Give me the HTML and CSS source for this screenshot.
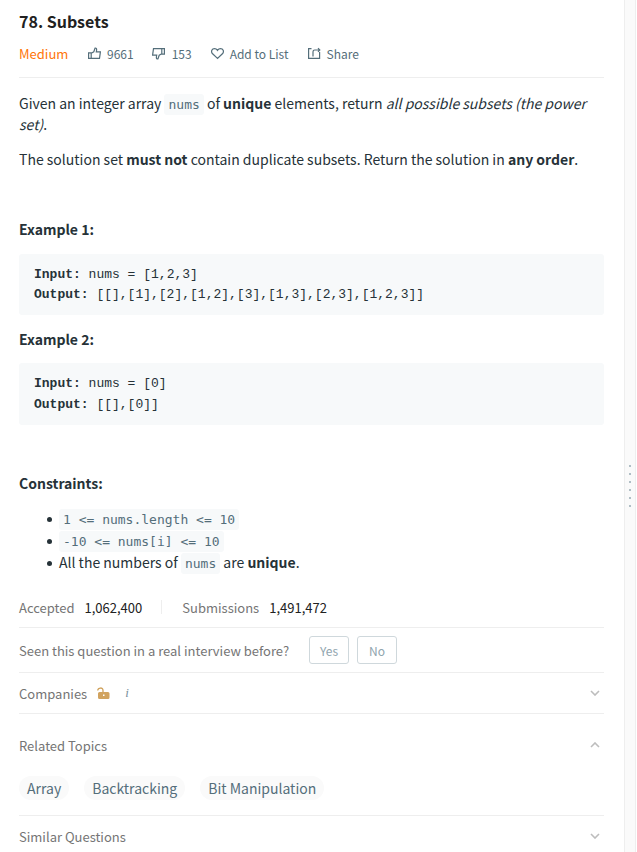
FILE: index.html
```html
<!DOCTYPE html>
<html lang="en">
<head>
<meta charset="utf-8">
<title>Subsets</title>
<link rel="stylesheet" href="styles.css">
</head>
<body>
<div class="layout">
<main class="panel">
  <h1 class="title">78. Subsets</h1>
  <div class="meta">
    <span class="difficulty">Medium</span>
    <span class="action"><svg class="icon" viewBox="0 0 13 13"><path d="M.6 5.800h2.600v5.600H.6zM3.200 6.200 5.800 4.800 7 1.200Q8.800.8 8.600 3l-.3 1.900h4.100l-.9 6.500H3.200"/></svg>9661</span>
    <span class="action dislikes"><svg class="icon" viewBox="0 0 13 13"><path d="M12.400 7.200H9.800V1.600h2.600zM9.800 6.800 7.200 8.200 6 11.800Q4.200 12.200 4.400 10l.3-1.900H.6l.9-6.500h8.300"/></svg>153</span>
    <span class="action list"><svg class="icon" viewBox="0 0 13 13"><path d="M6.500 11.400 1.600 6.800C-.5 4.500 1 1.600 3.500 1.600c1.500 0 2.400.8 3 1.700.6-.9 1.500-1.700 3-1.700 2.500 0 4 2.900 1.900 5.200z"/></svg>Add to List</span>
    <span class="action"><svg class="icon" viewBox="0 0 13 13"><path d="M3.500 1.600H.6v9.800h11V5M5 9.500V4.800q0-1.800 1.800-1.800h4.800M10 1.200l1.800 1.800L10 4.800"/></svg>Share</span>
  </div>
  <article class="content">
    <p>Given an integer array&nbsp;<code>nums</code>&nbsp;of <strong>unique</strong> elements, return <em>all possible subsets (the power set)</em>.</p>
    <p>The solution set <strong>must not</strong> contain duplicate subsets. Return the solution in <strong>any order</strong>.</p>
    <p>&nbsp;</p>
    <p><strong>Example 1:</strong></p>
<pre><strong>Input:</strong> nums = [1,2,3]
<strong>Output:</strong> [[],[1],[2],[1,2],[3],[1,3],[2,3],[1,2,3]]
</pre>
    <p class="second"><strong>Example 2:</strong></p>
<pre><strong>Input:</strong> nums = [0]
<strong>Output:</strong> [[],[0]]
</pre>
    <p>&nbsp;</p>
    <p><strong>Constraints:</strong></p>
    <ul>
      <li><code>1 &lt;= nums.length &lt;= 10</code></li>
      <li><code>-10 &lt;= nums[i] &lt;= 10</code></li>
      <li>All the numbers of&nbsp;<code>nums</code>&nbsp;are <strong>unique</strong>.</li>
    </ul>
  </article>
  <section class="stats"><span>Accepted</span><b>1,062,400</b><i class="divider"></i><span>Submissions</span><b>1,491,472</b></section>
  <section class="interview"><span>Seen this question in a real interview before?</span><button>Yes</button><button>No</button></section>
  <section class="row companies"><span>Companies</span>
    <svg class="lock" viewBox="0 0 13 13"><path class="shackle" d="M.7 3.500C1 .3 6 .1 6 3.500V6"/><path class="body" fill-rule="evenodd" d="M2.500 5H11q1.500 0 1.500 1.500v4q0 1.500-1.500 1.500H2.500Q1 12 1 10.500v-4Q1 5 2.500 5zM6 7.500v1.500h1.500V7.500z"/></svg>
    <span class="info">i</span>
    <svg class="chevron" viewBox="0 0 10 6"><path d="M1 1l4 4 4-4"/></svg>
  </section>
  <section class="topics">
    <div class="row"><span>Related Topics</span><svg class="chevron up" viewBox="0 0 10 6"><path d="M1 5l4-4 4 4"/></svg></div>
    <div class="tags"><span class="tag">Array</span><span class="tag">Backtracking</span><span class="tag">Bit Manipulation</span></div>
  </section>
  <section class="row similar"><span>Similar Questions</span><svg class="chevron" viewBox="0 0 10 6"><path d="M1 1l4 4 4-4"/></svg></section>
</main>
<aside class="splitter"><i></i><i></i><i></i><i></i><i></i><i></i></aside>
</div>
</body>
</html>
```

FILE: styles.css
```css
* { box-sizing: border-box; }
body { margin: 0; background: #fff; color: #263238; font: 14px/21px "Noto Sans CJK SC", sans-serif; overflow: hidden; }
.layout { display: flex; height: 852px; overflow: hidden; }
.panel { width: 624px; padding: 0 20px 0 19px; flex: none; }
.title { margin: 0; padding-top: 9px; height: 40px; font-size: 16px; line-height: 24px; font-weight: 700; color: #212121; }
.meta { display: flex; align-items: center; height: 38px; padding-bottom: 11px; border-bottom: 1px solid #eee; font-size: 12px; color: #546e7a; }
.difficulty { color: #ff7508; width: 69px; font-size: 13px; }
.action { display: flex; align-items: center; white-space: nowrap; margin-right: 18px; }
.icon { width: 13px; height: 13px; margin-right: 6px; fill: none; stroke: #546e7a; stroke-width: 1.2; }
.dislikes .icon { margin-right: 7px; }
.dislikes, .list { margin-right: 19px; }
.content { padding-top: 14.7px; height: 516px; }
p { margin: 0 0 14px; }
code { font: 13px "DejaVu Sans Mono", monospace; color: #546e7a; background: #f7f9fa; padding: 3px 4px; border-radius: 3px; }
pre { margin: 0 0 13.3px; padding: 10.9px 15px 9.1px; background: #f7f9fa; border-radius: 3px; font: 13px/20.8px "Liberation Mono", monospace; }
.second { margin-bottom: 13.7px; }
ul { margin: 0; padding-left: 40px; list-style: none; }
li { line-height: 21.8px; }
li:last-child { margin-top: .6px; }
li::before { content: ""; display: inline-block; width: 5px; height: 5px; margin: 0 7px 2px -12px; border-radius: 50%; background: #263238; }
section { border-bottom: 1px solid #eee; font-size: 13px; color: #757575; }
.stats { display: flex; align-items: center; height: 34px; padding-bottom: 7px; }
.stats b { font-weight: 400; color: #212121; margin-left: 10px; }
.divider { width: 1px; height: 14px; margin: 0 20px 0 19px; background: #eee; }
.interview { display: flex; align-items: center; height: 45px; }
.interview button { width: 40px; height: 28px; margin: 0 8px 0 0; padding: 0; background: #fff; border: 1px solid #cfd8dc; border-radius: 3px; font: 12px "Noto Sans CJK SC", sans-serif; color: #90a4ae; }
.interview span { width: 290px; }
.row { display: flex; align-items: center; }
.companies { height: 41px; }
.lock { width: 13px; height: 13px; margin-left: 10px; }
.shackle { fill: none; stroke: #cfa15b; stroke-width: 1.3; }
.body { fill: #d1a35f; }
.info { margin-left: 15px; font: italic 13px "Liberation Serif", serif; color: #78909c; }
.chevron { width: 10px; height: 6px; margin-left: auto; margin-right: 4px; fill: none; stroke: #bdbdbd; stroke-width: 1.6; }
.chevron.up { margin-bottom: 2px; }
.topics { height: 102px; padding-top: 21px; }
.tags { display: flex; gap: 15px; margin-top: 20px; }
.tag { height: 24px; line-height: 24px; padding: 0 8px; border-radius: 12px; background: #fafafa; font-size: 14px; color: #546e7a; }
.similar { height: 41px; border: 0; }
.similar .chevron { margin-bottom: 1px; }
.splitter { width: 12px; border: solid #eee; border-width: 0 1px; background: #fafafa; display: flex; flex-direction: column; align-items: center; gap: 6px; padding-top: 465px; }
.splitter i { width: 2px; height: 2px; background: #b0bec5; }
```
